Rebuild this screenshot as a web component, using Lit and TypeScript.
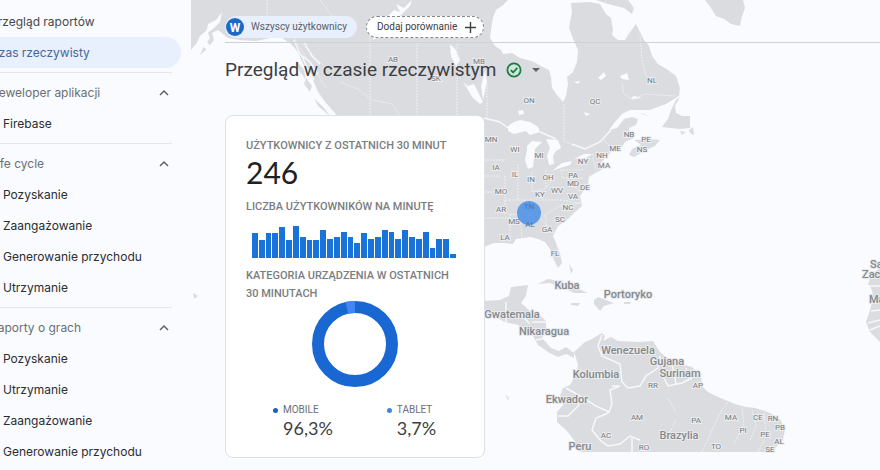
import { LitElement, html, css, svg } from "lit";
import { customElement } from "lit/decorators.js";
import { classMap } from "lit/directives/class-map.js";

interface NavItem { label: string; active?: boolean }
interface NavGroup { title: string; items: NavItem[] }

const TOP_LINKS: NavItem[] = [
  { label: "Przegląd raportów" },
  { label: "Czas rzeczywisty", active: true },
];

const GROUPS: NavGroup[] = [
  { title: "Deweloper aplikacji", items: [{ label: "Firebase" }] },
  {
    title: "Life cycle",
    items: [
      { label: "Pozyskanie" },
      { label: "Zaangażowanie" },
      { label: "Generowanie przychodu" },
      { label: "Utrzymanie" },
    ],
  },
  {
    title: "Raporty o grach",
    items: [
      { label: "Pozyskanie" },
      { label: "Utrzymanie" },
      { label: "Zaangażowanie" },
      { label: "Generowanie przychodu" },
    ],
  },
];

const PER_MINUTE = [
  25, 18, 25, 25, 31, 18, 32, 21, 18, 18, 28, 19, 21, 26, 21,
  15, 25, 19, 21, 28, 26, 19, 28, 21, 19, 26, 10, 19, 19, 4,
];

@customElement("side-nav")
class SideNav extends LitElement {
  static styles = css`
    :host {
      display: block;
      overflow: hidden;
      font: 400 12px/31px "Inter", sans-serif;
      color: #2b2d30;
    }
    nav {
      margin-left: -24px;
      padding: 6px 9px 0 0;
    }
    a {
      display: block;
      padding-left: 27px;
      color: inherit;
      text-decoration: none;
      white-space: nowrap;
    }
    .top {
      padding-left: 14px;
      color: #46494d;
    }
    .active {
      background: #e8effd;
      color: #44699b;
      border-radius: 0 16px 16px 0;
    }
    .group {
      margin-right: 9px;
      border-top: 1px solid #e2e5e9;
      margin-top: 4px;
      padding-top: 4px;
    }
    button {
      display: flex;
      width: 100%;
      justify-content: space-between;
      align-items: center;
      padding: 0 3px 0 14px;
      border: 0;
      background: none;
      font: inherit;
      color: #6b6f74;
    }
    svg {
      width: 10px;
      height: 10px;
      fill: none;
      stroke: #5f6368;
      stroke-width: 1.5;
    }
  `;

  render() {
    return html`
      <nav aria-label="Raporty">
        ${TOP_LINKS.map(
          (i) => html`<a href="#" class=${classMap({ top: true, active: !!i.active })}>${i.label}</a>`
        )}
        ${GROUPS.map(
          (g) => html`
            <div class="group">
              <button type="button" aria-expanded="true">
                <span>${g.title}</span>
                <svg viewBox="0 0 10 10" aria-hidden="true"><path d="M1 7l4-4 4 4" /></svg>
              </button>
              ${g.items.map((i) => html`<a href="#">${i.label}</a>`)}
            </div>
          `
        )}
      </nav>
    `;
  }
}

const LAND = [
  // North America
  "M191 0L508 0 503 5 496 10 493 18 491 30 490 38 495 46 501 50 503 54 512 53 520 58 532 61 541 66 549 70 551 77 552 88 557 95 563 102 566 96 568 84 567 77 573 72 577 62 578 50 574 41 569 28 572 12 571 3 590 2 600 4 606 14 611 18 613 30 612 35 618 40 625 40 630 32 636 24 640 32 644 40 649 46 652 56 658 64 668 70 676 76 680 88 679 96 666 104 650 110 630 110 622 114 615 122 609 130 617 128 624 119 632 117 638 119 636 125 629 128 630 134 634 138 625 142 622 147 612 151 606 157 601 163 603 169 595 173 589 177 588 184 584 190 580 196 582 206 574 213 566 221 558 226 553 236 556 243 560 254 562 263 558 268 554 260 550 249 545 242 538 239 530 237 516 239 513 244 505 243 494 243 484 247 484 130 340 120 334 112 326 103 318 92 312 78 303 64 298 52 291 44 282 38 270 38 256 41 240 40 228 38 218 30 212 33 214 40 208 48 200 55 204 46 210 38 207 30 200 36 196 44 191 50Z",
  // Nova Scotia and nearby islands
  "M634 140L648 139 660 140 655 146 646 150 634 157 629 155 632 149 641 145Z",
  "M640 113L650 116 644 115Z",
  // Newfoundland
  "M680 97L675 106 676 113 682 116 690 116 690 128 680 129 662 127 668 119 671 110 676 100Z",
  "M689 130L693 127 694 135 690 133ZM680 131L686 132 682 135Z",
  // Baffin and Greenland
  "M596 0L628 0 634 8 632 14 624 8 608 4Z",
  "M705 0L711 8 716 16 724 19 731 24 740 26 742 16 745 8 743 0Z",
  // Caribbean
  "M538 284L548 279 560 281 572 286 588 293 574 293 562 287 550 283Z",
  "M594 300L598 297 614 303 604 306 600 311 594 304ZM571 303L580 303 578 306 571 305ZM624 302L631 302 630 304 624 304Z",
  "M569 264L573 270 571 274ZM505 394L509 398 508 400Z",
  // Central America
  "M484 301L500 300 509 296 511 287 528 285 526 296 521 303 530 311 540 315 546 321 546 329 542 338 551 348 559 351 566 347 574 353 574 358 566 354 558 357 548 352 538 345 532 334 518 325 505 322 495 317 484 313Z",
  // South America
  "M576 358L574 352 585 342 590 340 602 333 605 336 603 341 611 337 618 341 640 342 653 341 660 352 672 362 692 367 701 376 702 386 708 392 716 396 735 404 746 407 755 408 768 412 780 419 785 429 783 440 776 447 773 452 580 452 574 440 566 430 557 422 557 412 563 405 560 396 563 388 570 385 576 374 578 365Z",
  // Africa
  "M880 268L872 274 868 284 872 290 873 298 870 310 866 322 870 332 880 342Z",
  // Pacific coast islands
  "M296 60L304 70 306 80 300 72ZM306 78L312 86 310 92 304 84ZM314 98L324 108 330 116 318 106Z",
];

const WATER = [
  "M508 126L514 122 520 120 530 122 538 127 540 132 530 135 526 131 514 134 508 131Z",
  "M527 146L532 141 542 142 535 149 534 158 533 167 528 169 525 160 527 150Z",
  "M546 139L558 140 561 148 556 151 553 156 554 164 549 165 547 156 550 148Z",
  "M552 171L562 163 572 161 570 165 560 168Z",
  "M574 159L584 154 592 154 586 158Z",
  "M463 82L468 86 474 84 478 92 483 102 480 104 473 98 468 90Z",
  "M450 44L456 50 460 60 456 66 451 56Z",
  "M386 18L394 10 400 12 396 4 404 8 412 0 410 6 400 16 390 20Z",
  "M372 40L380 32 392 28 398 32 384 36Z",
  "M485 70L487 82 483 100 481 86Z",
  "M598 78L604 72 606 76 601 80ZM620 76L627 73 629 80 622 79Z",
  "M562 58L566 62 562 64ZM480 22L484 30 480 34Z",
  "M216 58L200 44 206 40 210 46ZM634 96L642 98 630 99Z",
  "M518 111L523 110 524 114 519 115ZM574 82L580 81 578 84ZM584 112L590 114 586 116Z",
  "M222 12L216 20 208 24 206 34 214 28 220 22Z",
];

const THIN_BORDERS = [
  "M267 0V38M294 38L318 76M300 42L324 66M310 62L326 88M370 30V120M417 42V116M457 44V116M487 84V118",
  "M340 82L360 90 372 100 392 104 400 116M320 0L334 18 340 36",
  "M564 104V141L574 146M640 36L642 60 646 76M622 84L624 94 634 100 644 94 676 96",
  "M484 160H506M484 176H500M505 176V214M518 164V200M532 172V192M484 218H510M510 214V240M520 214L522 238M545 215L548 232",
  "M506 200H562L580 203M532 192L546 188 556 176M546 170V188M560 170L584 170M562 170V178H584M545 215L560 206 580 203",
  "M510 214L534 216M538 216L552 232M592 154L596 170M604 140L612 150M484 192H504M572 184L580 192",
  "M702 452L712 430 722 410 728 402M734 444L744 424 742 408M750 440L756 426 752 410M676 420L668 436M758 452L766 436 764 412M668 398L676 412",
];

const BORDERS = [
  "M484 118L500 122 508 128M540 132L556 139M572 144L585 149 600 142 611 130",
  "M294 40L300 54 310 62 318 74M304 42L312 56 320 64 M302 56L308 70 314 80",
  "M602 335L598 346 602 356 620 364 622 382 628 388 640 386 646 376 658 368 660 356",
  "M660 370L668 386 682 383 692 378M672 364L676 384M686 368L690 380",
  "M612 386H620L610 390 612 404 609 412 596 406 580 396 566 388M609 412L606 414 596 418 592 430 600 440 608 446 620 444 630 436 640 440M558 416L568 416 578 406 582 398M632 438V452",
  "M506 302V322M520 314L530 324M532 322L546 322M536 340L546 338",
  "M869 286H880M871 311L880 310M868 323L880 320M870 330L880 326",
];

const STATE_LABELS: [string, number, number][] = [
  ["AB", 393, 62], ["MB", 479, 64], ["SK", 436, 81], ["ON", 529, 103], ["QC", 595, 104], ["NL", 652, 83],
  ["MN", 491, 142], ["WI", 515, 152], ["MI", 539, 158], ["NB", 629, 137], ["PE", 646, 142], ["NS", 642, 152],
  ["ME", 615, 151], ["NH", 602, 158], ["NY", 583, 164], ["MA", 604, 168], ["IA", 496, 170], ["IL", 515, 177],
  ["IN", 531, 182], ["OH", 548, 180], ["PA", 573, 178], ["MD", 573, 186], ["DE", 585, 190], ["MO", 501, 194],
  ["KY", 540, 197], ["WV", 557, 193], ["VA", 573, 199], ["AR", 501, 212], ["NC", 568, 210],
  ["MS", 514, 224], ["SC", 560, 222], ["GA", 547, 232], ["LA", 505, 240], ["FL", 555, 256],
  ["RR", 653, 388], ["AP", 698, 388], ["AM", 637, 420], ["AC", 606, 438], ["RO", 644, 450], ["PA", 696, 423],
  ["MA", 731, 420], ["PI", 743, 433], ["CE", 758, 420], ["RN", 773, 421], ["PB", 780, 430], ["PE", 765, 437],
  ["AL", 779, 444], ["SE", 770, 452], ["TO", 716, 449],
];

const COUNTRY_LABELS: [string, number, number][] = [
  ["Kuba", 567, 289], ["Portoryko", 628, 298], ["Gwatemala", 512, 318], ["Nikaragua", 544, 335],
  ["Wenezuela", 628, 354], ["Gujana", 667, 365], ["Surinam", 680, 377], ["Kolumbia", 596, 378],
  ["Ekwador", 567, 403], ["Peru", 580, 450], ["Brazylia", 679, 439],
];

@customElement("world-map")
class WorldMap extends LitElement {
  static styles = css`
    :host { display: block; }
    svg { display: block; width: 100%; height: 100%; }
    .land { fill: #dbdce0; }
    .water { fill: #fafbfe; }
    .thin { fill: none; stroke: #eff0f3; stroke-width: 1; stroke-dasharray: 2 1; }
    .border { fill: none; stroke: #f7f8fa; stroke-width: 1.5; }
    text { font-family: "Roboto", sans-serif; text-anchor: middle; }
    .edge { text-anchor: start; }
    .state { font-size: 8px; fill: #74777b; stroke: #eceef0; stroke-width: 2; paint-order: stroke; }
    .covered { font-size: 8px; fill: #4673ad; }
    .country { font-size: 11px; font-weight: 500; fill: #85888c; stroke: #e9ebed; stroke-width: 2; paint-order: stroke; }
    .users { fill: #4a8fe7; fill-opacity: 0.85; }
  `;

  render() {
    return html`
      <svg viewBox="190 0 690 470" preserveAspectRatio="xMinYMin slice" role="img" aria-label="Mapa użytkowników">
        <path class="land" d=${LAND.join("")} />
        <path class="water" d=${WATER.join("")} />
        <path class="thin" d=${THIN_BORDERS.join("")} />
        <path class="border" d=${BORDERS.join("")} />
        <path class="land" d="M193 293L198 296 194 299Z" />
        ${STATE_LABELS.map(([t, x, y]) => svg`<text class="state" x=${x} y=${y}>${t}</text>`)}
        ${COUNTRY_LABELS.map(([t, x, y]) => svg`<text class="country" x=${x} y=${y}>${t}</text>`)}
        <text class="country edge" x="870" y="268">Sahara</text>
        <text class="country edge" x="862" y="278">Zachodnia</text>
        <text class="country edge" x="869" y="303">Mauretania</text>
        <circle class="users" cx="529" cy="213" r="12" />
        <text class="covered" x="529" y="209">TN</text>
        <text class="covered" x="530" y="227">AL</text>
      </svg>
    `;
  }
}

@customElement("realtime-card")
class RealtimeCard extends LitElement {
  static styles = css`
    :host {
      display: block;
      box-sizing: border-box;
      padding: 21px 20px 19px;
      background: #fff;
      border: 1px solid #dde0e4;
      border-radius: 8px;
      font-family: "Roboto", sans-serif;
    }
    h2, p, dl, dt, dd { margin: 0; }
    h2 {
      font-size: 11px;
      line-height: 18px;
      font-weight: 500;
      color: #7a7d81;
      text-transform: uppercase;
    }
    .total {
      font: 400 30px/34px "Lato", sans-serif;
      color: #202124;
      margin-bottom: 9px;
    }
    .bars {
      display: flex;
      align-items: flex-end;
      gap: 1px;
      height: 32px;
      margin: 10px 8px 9px 6px;
    }
    .bar { flex: 1; background: #1a73d8; }
    .donut { display: block; width: 86px; height: 86px; margin: -2px auto 15px; }
    .mobile { fill: none; stroke: #1967d2; stroke-width: 12; }
    .tablet { fill: none; stroke: #4285f4; stroke-width: 12; }
    .legend { display: flex; gap: 54px; padding-left: 27px; }
    dt {
      display: flex;
      align-items: center;
      gap: 5px;
      font-size: 10px;
      line-height: 16px;
      color: #6b6f74;
    }
    .dot { width: 5px; height: 5px; border-radius: 50%; background: #1b5fc0; }
    .dot.light { background: #4a80dc; }
    dd { padding-left: 10px; font: 400 18px/20px "Lato", sans-serif; color: #3c4043; }
  `;

  render() {
    const r = 37;
    const c = 2 * Math.PI * r;
    const tablet = 0.037 * c;
    return html`
      <h2>Użytkownicy z ostatnich 30 minut</h2>
      <p class="total">246</p>
      <h2>Liczba użytkowników na minutę</h2>
      <div class="bars" role="img" aria-label="Liczba użytkowników na minutę">
        ${PER_MINUTE.map((v) => html`<div class="bar" style="height:${v}px"></div>`)}
      </div>
      <h2>Kategoria urządzenia w ostatnich 30 minutach</h2>
      <svg class="donut" viewBox="0 0 86 86" role="img" aria-label="Kategoria urządzenia">
        <circle class="mobile" cx="43" cy="43" r=${r} />
        <circle class="tablet" cx="43" cy="43" r=${r}
          stroke-dasharray="${tablet} ${c - tablet}" stroke-dashoffset=${tablet} transform="rotate(-90 43 43)" />
      </svg>
      <dl class="legend">
        <div><dt><span class="dot"></span>MOBILE</dt><dd>96,3%</dd></div>
        <div><dt><span class="dot light"></span>TABLET</dt><dd>3,7%</dd></div>
      </dl>
    `;
  }
}

@customElement("app-root")
class AppRoot extends LitElement {
  static styles = css`
    :host {
      display: grid;
      grid-template-columns: 190px minmax(0, 1fr);
      min-height: 100vh;
      background: #fafbfe;
      font-family: "Roboto", sans-serif;
    }
    side-nav { height: 0; min-height: 100%; }
    main { position: relative; padding: 0 0 8px 35px; }
    world-map { position: absolute; inset: 0; }
    .content { position: relative; }
    header {
      display: flex;
      gap: 9px;
      padding: 16px 0 4px;
      border-bottom: 1px solid #cfd1d5;
    }
    .chip {
      display: flex;
      align-items: center;
      box-sizing: border-box;
      height: 22px;
      border-radius: 11px;
      border: 1px solid #e8effd;
      background: #e8effd;
      font: 400 10px/20px "Roboto", sans-serif;
      color: #5a5e66;
      gap: 7px;
      padding: 0 9px 0 0;
    }
    .chip.add {
      background: #fff;
      border: 1px dashed #85888c;
      color: #3c4043;
      padding: 0 7px 0 10px;
      gap: 8px;
    }
    .avatar {
      display: grid;
      place-items: center;
      width: 18px;
      height: 18px;
      border-radius: 50%;
      background: #1b6ac9;
      color: #fff;
      font-weight: 700;
      font-size: 12px;
    }
    .plus { width: 11px; height: 11px; stroke: #3c4043; stroke-width: 1.4; }
    .title { display: flex; align-items: center; gap: 10px; height: 54px; }
    h1 { margin: 0; font: 400 19px/28px "Roboto", sans-serif; color: #3c4043; }
    .ok { width: 16px; height: 16px; fill: #cfe9d8; stroke: #1e7a45; stroke-width: 1.8; }
    .menu { display: flex; border: 0; padding: 0; background: none; }
    .menu svg { width: 8px; height: 4px; fill: #5f6368; }
    realtime-card { width: min(260px, 100%); margin-top: 18px; }
  `;

  render() {
    return html`
      <side-nav></side-nav>
      <main>
        <world-map></world-map>
        <div class="content">
          <header>
            <button class="chip" type="button"><span class="avatar">W</span>Wszyscy użytkownicy</button>
            <button class="chip add" type="button">
              Dodaj porównanie
              <svg class="plus" viewBox="0 0 11 11" aria-hidden="true"><path d="M5.5 0v11M0 5.5h11" /></svg>
            </button>
          </header>
          <div class="title">
            <h1>Przegląd w czasie rzeczywistym</h1>
            <svg class="ok" viewBox="0 0 16 16" aria-hidden="true"><circle cx="8" cy="8" r="6.6" /><path d="M4.8 8.2l2.3 2.3 4.2-4.6" fill="none" /></svg>
            <button class="menu" type="button" aria-label="Stan danych"><svg viewBox="0 0 8 4"><path d="M0 0h8L4 4z" /></svg></button>
          </div>
          <realtime-card></realtime-card>
        </div>
      </main>
    `;
  }
}
